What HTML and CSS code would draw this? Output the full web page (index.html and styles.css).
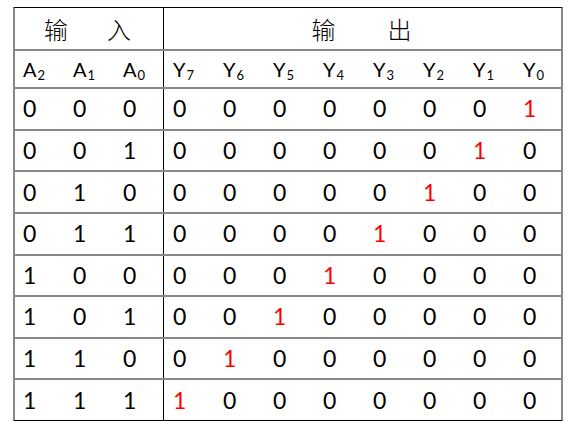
FILE: index.html
```html
<!DOCTYPE html>
<html lang="zh">
<head>
<meta charset="utf-8">
<title>3-8 译码器真值表</title>
<link rel="stylesheet" href="styles.css">
</head>
<body>
<div class="truth">
  <div class="row head">
    <div class="cell group"><span>输</span><span>入</span></div>
    <div class="cell group out"><span>输</span><span>出</span></div>
  </div>
  <div class="row names">
    <div class="cell">A<sub>2</sub></div>
    <div class="cell">A<sub>1</sub></div>
    <div class="cell">A<sub>0</sub></div>
    <div class="cell">Y<sub>7</sub></div>
    <div class="cell">Y<sub>6</sub></div>
    <div class="cell">Y<sub>5</sub></div>
    <div class="cell">Y<sub>4</sub></div>
    <div class="cell">Y<sub>3</sub></div>
    <div class="cell">Y<sub>2</sub></div>
    <div class="cell">Y<sub>1</sub></div>
    <div class="cell">Y<sub>0</sub></div>
  </div>
  <div class="row data">
    <div class="cell">0</div><div class="cell">0</div><div class="cell">0</div>
    <div class="cell">0</div><div class="cell">0</div><div class="cell">0</div><div class="cell">0</div><div class="cell">0</div><div class="cell">0</div><div class="cell">0</div><div class="cell hot">1</div>
  </div>
  <div class="row data">
    <div class="cell">0</div><div class="cell">0</div><div class="cell">1</div>
    <div class="cell">0</div><div class="cell">0</div><div class="cell">0</div><div class="cell">0</div><div class="cell">0</div><div class="cell">0</div><div class="cell hot">1</div><div class="cell">0</div>
  </div>
  <div class="row data">
    <div class="cell">0</div><div class="cell">1</div><div class="cell">0</div>
    <div class="cell">0</div><div class="cell">0</div><div class="cell">0</div><div class="cell">0</div><div class="cell">0</div><div class="cell hot">1</div><div class="cell">0</div><div class="cell">0</div>
  </div>
  <div class="row data">
    <div class="cell">0</div><div class="cell">1</div><div class="cell">1</div>
    <div class="cell">0</div><div class="cell">0</div><div class="cell">0</div><div class="cell">0</div><div class="cell hot">1</div><div class="cell">0</div><div class="cell">0</div><div class="cell">0</div>
  </div>
  <div class="row data">
    <div class="cell">1</div><div class="cell">0</div><div class="cell">0</div>
    <div class="cell">0</div><div class="cell">0</div><div class="cell">0</div><div class="cell hot">1</div><div class="cell">0</div><div class="cell">0</div><div class="cell">0</div><div class="cell">0</div>
  </div>
  <div class="row data">
    <div class="cell">1</div><div class="cell">0</div><div class="cell">1</div>
    <div class="cell">0</div><div class="cell">0</div><div class="cell hot">1</div><div class="cell">0</div><div class="cell">0</div><div class="cell">0</div><div class="cell">0</div><div class="cell">0</div>
  </div>
  <div class="row data">
    <div class="cell">1</div><div class="cell">1</div><div class="cell">0</div>
    <div class="cell">0</div><div class="cell hot">1</div><div class="cell">0</div><div class="cell">0</div><div class="cell">0</div><div class="cell">0</div><div class="cell">0</div><div class="cell">0</div>
  </div>
  <div class="row data last">
    <div class="cell">1</div><div class="cell">1</div><div class="cell">1</div>
    <div class="cell hot">1</div><div class="cell">0</div><div class="cell">0</div><div class="cell">0</div><div class="cell">0</div><div class="cell">0</div><div class="cell">0</div><div class="cell">0</div>
  </div>
</div>
</body>
</html>
```
FILE: styles.css
```css
html, body {
  margin: 0;
  padding: 0;
  background: #ffffff;
}

body {
  font-family: Lato, "Liberation Sans", sans-serif;
  color: #000000;
}

.truth {
  margin: 7px 0 0 13px;
  width: 546px;
  border-top: 1px solid #000000;
  border-bottom: 1px solid #000000;
  border-left: 2px solid #888888;
  border-right: 2px solid #888888;
}

.row {
  display: grid;
  grid-template-columns: 48px 50px 50px repeat(7, 50px) 48px;
  border-bottom: 2px solid #888888;
}

.row.last {
  border-bottom: none;
}

.cell {
  box-sizing: border-box;
  display: flex;
  align-items: center;
  padding-left: 10px;
  line-height: 1;
}

.row > .cell:first-child {
  padding-left: 8px;
}

.row > .cell:nth-child(4) {
  border-left: 1px solid #000000;
  padding-left: 9px;
}

/* top header row */
.row.head {
  grid-template-columns: 148px 398px;
  height: 41px;
}

.row.head > .cell.group {
  justify-content: center;
  padding-left: 0;
  gap: 39px;
  font-family: "Noto Sans CJK SC", sans-serif;
  font-weight: 300;
  font-size: 24px;
  padding-right: 3px;
}

.row.head > .cell.out {
  border-left: 1px solid #000000;
  gap: 52px;
  padding-right: 2px;
}

/* column names row */
.row.names {
  height: 36px;
  font-size: 20px;
}

.row.names .cell {
  display: block;
  line-height: 36px;
}

.row.names sub {
  font-size: 13px;
  vertical-align: -3px;
  line-height: 1;
  margin-left: 1px;
}

/* data rows */
.row.data {
  height: 39.625px;
  font-size: 23px;
}

.hot {
  color: #ff0000;
}
```
